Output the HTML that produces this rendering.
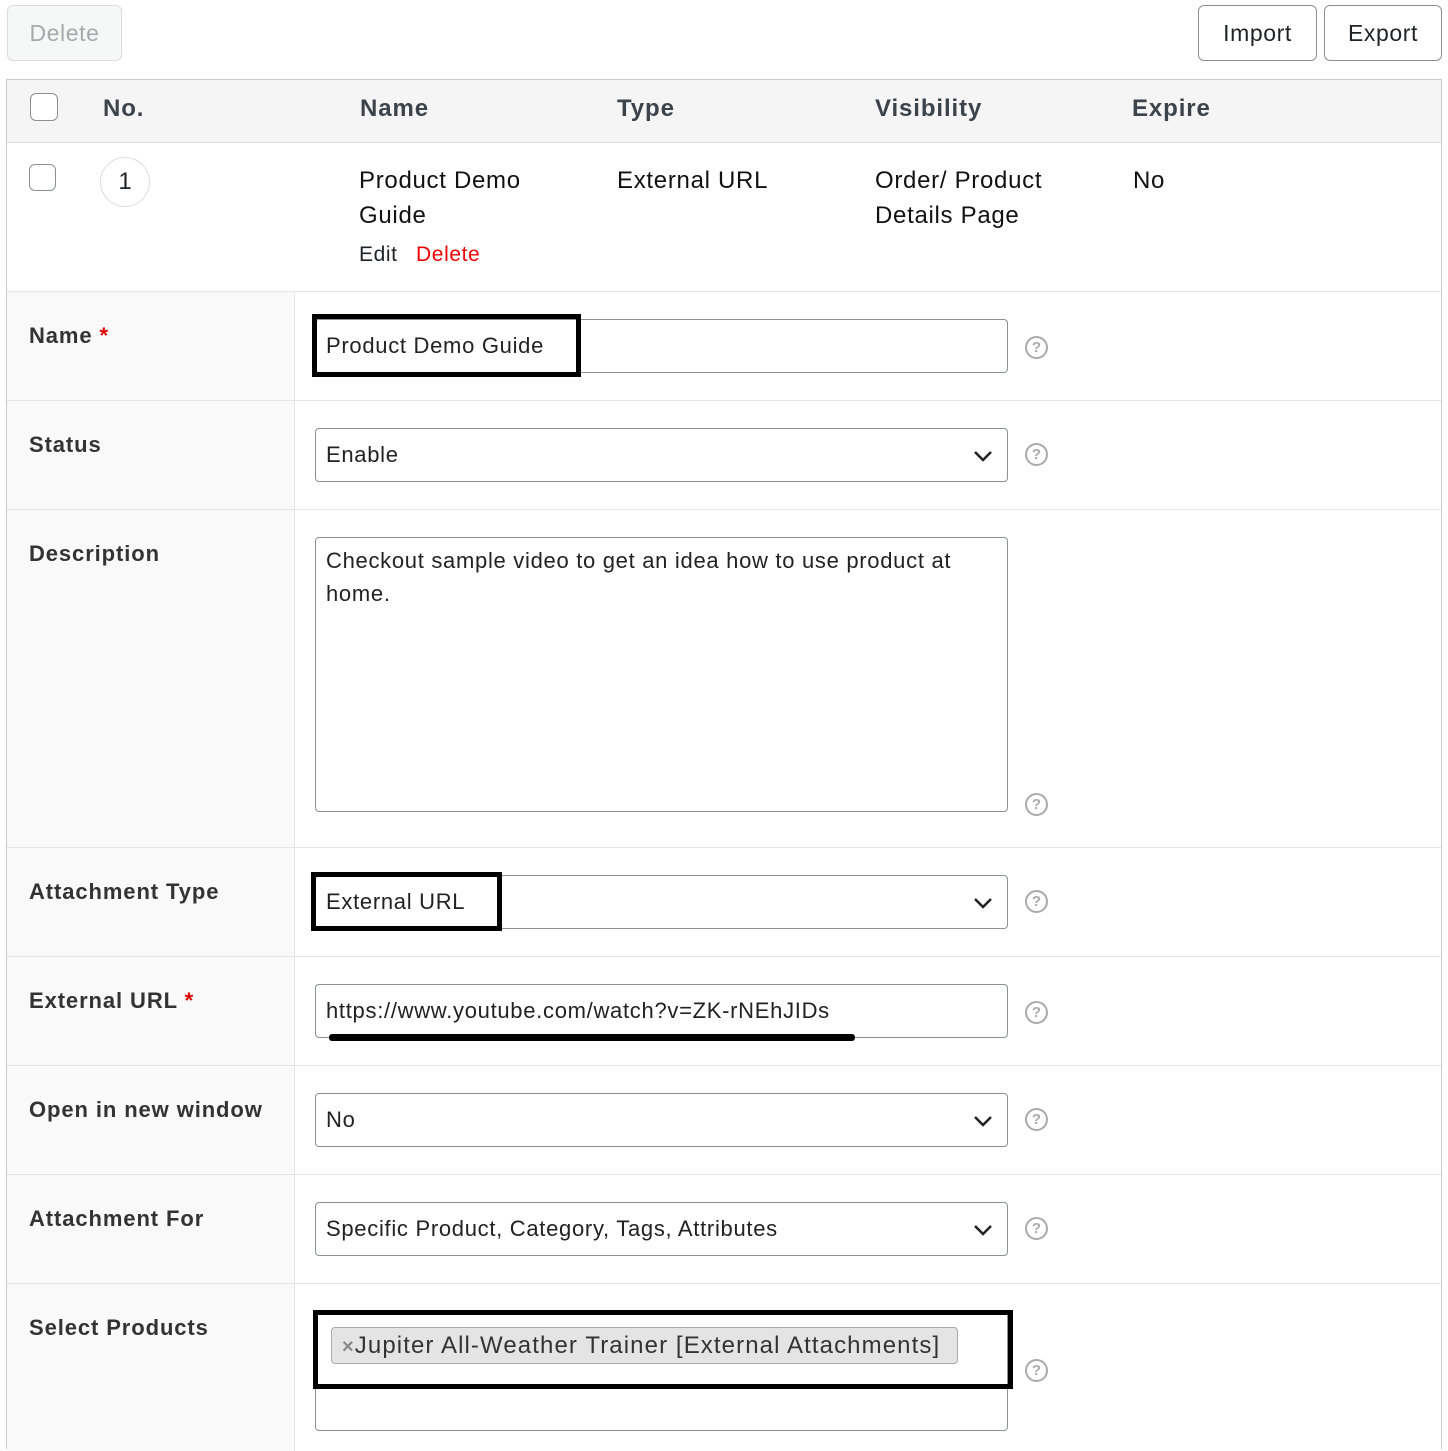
<!DOCTYPE html>
<html><head><style>
*{box-sizing:border-box;margin:0;padding:0}
body{width:1448px;height:1442px;overflow:hidden;background:#fff;font-family:"Liberation Sans",Arial,sans-serif;color:#1d2327;position:relative}
.a{position:absolute}
.btn{position:absolute;border:1px solid #8c8f94;border-radius:6px;background:#fff;font-size:23px;letter-spacing:0.6px;display:flex;align-items:center;justify-content:center;color:#1d2327}
.th{position:absolute;top:95px;font-size:24px;font-weight:bold;color:#3c434a;letter-spacing:0.9px}
.td{position:absolute;font-size:24px;line-height:35px;color:#111;letter-spacing:0.7px}
.cb{position:absolute;width:28px;height:28px;border:1px solid #8c8f94;border-radius:6px;background:#fff}
.row{position:absolute;left:7px;width:1434px;border-top:1px solid #e5e5e5}
.lab{position:absolute;left:29px;font-size:22px;font-weight:bold;color:#333;letter-spacing:0.9px}
.req{color:#d00}
.inp{position:absolute;left:315px;width:693px;height:54px;border:1px solid #8c8f94;border-radius:4px;font-size:22px;letter-spacing:0.7px;padding:0 10px;display:flex;align-items:center;color:#222;background:#fff}
.hl{position:absolute;border:5px solid #000}
.q{position:absolute;left:1025px;width:23px;height:23px;border:2px solid #aaa;border-radius:50%;color:#aaa;font-size:15px;font-weight:bold;text-align:center;line-height:19px}
.chev{position:absolute;right:14px;top:20px}
</style></head><body>
<div class="btn" style="left:7px;top:5px;width:115px;height:56px;background:#f6f7f7;border-color:#dcdcde;color:#a7aaad">Delete</div>
<div class="btn" style="left:1198px;top:5px;width:119px;height:56px">Import</div>
<div class="btn" style="left:1324px;top:5px;width:118px;height:56px">Export</div>

<div class="a" style="left:6px;top:79px;width:1436px;height:1370px;border:1px solid #ccc;border-bottom:none"></div>
<div class="a" style="left:7px;top:80px;width:1434px;height:63px;background:#f5f5f5;border-bottom:1px solid #ddd"></div>
<div class="cb" style="left:30px;top:93px"></div>
<div class="th" style="left:103px">No.</div>
<div class="th" style="left:360px">Name</div>
<div class="th" style="left:617px">Type</div>
<div class="th" style="left:875px">Visibility</div>
<div class="th" style="left:1132px">Expire</div>

<div class="cb" style="left:29px;top:164px;width:27px;height:27px"></div>
<div class="a" style="left:100px;top:157px;width:50px;height:50px;border:1px solid #ddd;border-radius:50%;font-size:24px;text-align:center;line-height:48px">1</div>
<div class="td" style="left:359px;top:163px">Product Demo<br>Guide</div>
<div class="a" style="left:359px;top:243px;font-size:21px;letter-spacing:0.6px">Edit <span style="color:#e00;margin-left:12px">Delete</span></div>
<div class="td" style="left:617px;top:163px">External URL</div>
<div class="td" style="left:875px;top:163px">Order/ Product<br>Details Page</div>
<div class="td" style="left:1133px;top:163px">No</div>

<div class="a" style="left:7px;top:291px;width:288px;height:1160px;background:#f9f9f9;border-right:1px solid #e5e5e5"></div>
<div class="row" style="top:291px"></div>
<div class="row" style="top:400px"></div>
<div class="row" style="top:509px"></div>
<div class="row" style="top:847px"></div>
<div class="row" style="top:956px"></div>
<div class="row" style="top:1065px"></div>
<div class="row" style="top:1174px"></div>
<div class="row" style="top:1283px"></div>

<div class="lab" style="top:323px">Name <span class="req">*</span></div>
<div class="inp" style="top:319px">Product Demo Guide</div>
<div class="hl" style="left:312px;top:314px;width:269px;height:63px"></div>
<div class="q" style="top:336px">?</div>

<div class="lab" style="top:432px">Status</div>
<div class="inp" style="top:428px">Enable<svg class="chev" width="20" height="14" viewBox="0 0 20 14"><path d="M2 3l8 8 8-8" fill="none" stroke="#222" stroke-width="2.5"/></svg></div>
<div class="q" style="top:443px">?</div>

<div class="lab" style="top:541px">Description</div>
<div class="inp" style="top:537px;height:275px;align-items:flex-start;padding-top:6px;line-height:33px;padding-right:20px">Checkout sample video to get an idea how to use product at home.</div>
<div class="q" style="top:793px">?</div>

<div class="lab" style="top:879px">Attachment Type</div>
<div class="inp" style="top:875px">External URL<svg class="chev" width="20" height="14" viewBox="0 0 20 14"><path d="M2 3l8 8 8-8" fill="none" stroke="#222" stroke-width="2.5"/></svg></div>
<div class="hl" style="left:311px;top:872px;width:191px;height:59px"></div>
<div class="q" style="top:890px">?</div>

<div class="lab" style="top:988px">External URL <span class="req">*</span></div>
<div class="inp" style="top:984px">https://www.youtube.com/watch?v=ZK-rNEhJIDs</div>
<div class="a" style="left:329px;top:1034px;width:526px;height:7px;background:#000;border-radius:3px"></div>
<div class="q" style="top:1001px">?</div>

<div class="lab" style="top:1097px">Open in new window</div>
<div class="inp" style="top:1093px">No<svg class="chev" width="20" height="14" viewBox="0 0 20 14"><path d="M2 3l8 8 8-8" fill="none" stroke="#222" stroke-width="2.5"/></svg></div>
<div class="q" style="top:1108px">?</div>

<div class="lab" style="top:1206px">Attachment For</div>
<div class="inp" style="top:1202px">Specific Product, Category, Tags, Attributes<svg class="chev" width="20" height="14" viewBox="0 0 20 14"><path d="M2 3l8 8 8-8" fill="none" stroke="#222" stroke-width="2.5"/></svg></div>
<div class="q" style="top:1217px">?</div>

<div class="lab" style="top:1315px">Select Products</div>
<div class="inp" style="top:1310px;height:121px"></div>
<div class="a" style="left:331px;top:1327px;width:627px;height:37px;background:#e4e4e4;border:1px solid #aaa;border-radius:4px;font-size:24px;letter-spacing:1.1px;line-height:35px;color:#333;padding-left:10px;white-space:nowrap"><span style="color:#888;font-size:20px;font-weight:bold">×</span>Jupiter All-Weather Trainer [External Attachments]</div>
<div class="hl" style="left:313px;top:1310px;width:700px;height:79px"></div>
<div class="q" style="top:1359px">?</div>
</body></html>
